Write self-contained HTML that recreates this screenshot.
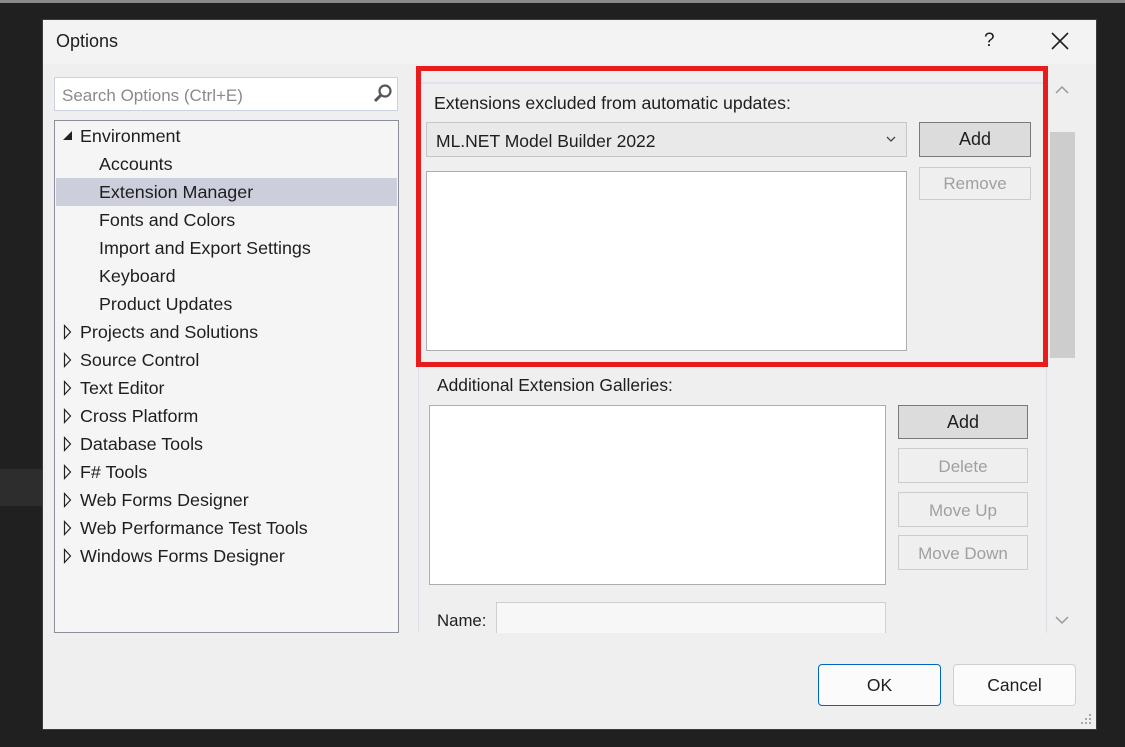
<!DOCTYPE html>
<html><head><meta charset="utf-8"><style>
*{margin:0;padding:0;box-sizing:border-box}
body{width:1125px;height:747px;background:#202020;position:relative;overflow:hidden;font-family:"Liberation Sans",sans-serif;color:#1e1e1e}
.a{position:absolute}
.t{font-size:17px;white-space:nowrap}
.tr{font-size:17.9px}
.btn{position:absolute;border:1px solid #cccccc;background:#efefef;color:#a0a0a0;font-size:17px;text-align:center}
</style></head><body>
<div class="a" style="left:0;top:0;width:1125px;height:3px;background:#8a8a8a"></div>
<div class="a" style="left:0;top:469px;width:43px;height:37px;background:#2d2d2d"></div>
<div class="a" style="left:42px;top:19px;width:1055px;height:711px;background:#3c3c3c"></div>
<div class="a" style="left:43px;top:20px;width:1053px;height:709px;background:#efefef"></div>
<div class="a" style="left:43px;top:20px;width:1053px;height:44px;background:#f3f3f3"></div>
<div class="a t" style="left:56px;top:31px;font-size:18px">Options</div>
<div class="a t" style="left:984px;top:30px;font-size:19px">?</div>
<svg class="a" style="left:1050px;top:31px" width="20" height="20"><path d="M2 2L18 18M18 2L2 18" stroke="#222" stroke-width="1.6"/></svg>

<div class="a" style="left:54px;top:77px;width:344px;height:34px;background:#fff;border:1px solid #ccd2e2"></div>
<div class="a t" style="left:62px;top:86px;color:#8a8a8a">Search Options (Ctrl+E)</div>
<svg class="a" style="left:372px;top:83px" width="22" height="22"><circle cx="13" cy="8" r="5.5" stroke="#555" stroke-width="2.2" fill="none"/><path d="M9 12L3 18" stroke="#555" stroke-width="3"/></svg>

<div class="a" style="left:54px;top:120px;width:345px;height:513px;background:#f5f5f5;border:1px solid #8a8f99"></div>
<div class="a" style="left:56px;top:178px;width:341px;height:28px;background:#cccedb"></div>
<svg class="a" style="left:62px;top:130px" width="12" height="12"><path d="M1 10H10V1Z" fill="#222"/></svg>
<div class="a t tr" style="left:80px;top:126px">Environment</div>
<div class="a t tr" style="left:99px;top:154px">Accounts</div>
<div class="a t tr" style="left:99px;top:182px">Extension Manager</div>
<div class="a t tr" style="left:99px;top:210px">Fonts and Colors</div>
<div class="a t tr" style="left:99px;top:238px">Import and Export Settings</div>
<div class="a t tr" style="left:99px;top:266px">Keyboard</div>
<div class="a t tr" style="left:99px;top:294px">Product Updates</div>
<svg class="a" style="left:63px;top:323px" width="10" height="260">
<g fill="none" stroke="#222" stroke-width="1.2">
<path d="M1.5 2.5L7.5 9L1.5 15.5Z"/>
<path transform="translate(0,28)" d="M1.5 2.5L7.5 9L1.5 15.5Z"/>
<path transform="translate(0,56)" d="M1.5 2.5L7.5 9L1.5 15.5Z"/>
<path transform="translate(0,84)" d="M1.5 2.5L7.5 9L1.5 15.5Z"/>
<path transform="translate(0,112)" d="M1.5 2.5L7.5 9L1.5 15.5Z"/>
<path transform="translate(0,140)" d="M1.5 2.5L7.5 9L1.5 15.5Z"/>
<path transform="translate(0,168)" d="M1.5 2.5L7.5 9L1.5 15.5Z"/>
<path transform="translate(0,196)" d="M1.5 2.5L7.5 9L1.5 15.5Z"/>
<path transform="translate(0,224)" d="M1.5 2.5L7.5 9L1.5 15.5Z"/>
</g></svg>
<div class="a t tr" style="left:80px;top:322px">Projects and Solutions</div>
<div class="a t tr" style="left:80px;top:350px">Source Control</div>
<div class="a t tr" style="left:80px;top:378px">Text Editor</div>
<div class="a t tr" style="left:80px;top:406px">Cross Platform</div>
<div class="a t tr" style="left:80px;top:434px">Database Tools</div>
<div class="a t tr" style="left:80px;top:462px">F# Tools</div>
<div class="a t tr" style="left:80px;top:490px">Web Forms Designer</div>
<div class="a t tr" style="left:80px;top:518px">Web Performance Test Tools</div>
<div class="a t tr" style="left:80px;top:546px">Windows Forms Designer</div>

<div class="a" style="left:418px;top:70px;width:629px;height:563px;border-left:1px solid #dde0e6;border-right:1px solid #dde0e6"></div>
<div class="a" style="left:420px;top:82px;width:625px;height:2px;background:#e0e4ea"></div>
<div class="a" style="left:1050px;top:132px;width:25px;height:226px;background:#cdcdcd"></div>
<svg class="a" style="left:1055px;top:85px" width="14" height="10"><path d="M1 8L7 2L13 8" stroke="#999" stroke-width="1.5" fill="none"/></svg>
<svg class="a" style="left:1055px;top:615px" width="14" height="10"><path d="M1 2L7 8L13 2" stroke="#999" stroke-width="1.5" fill="none"/></svg>

<div class="a t" style="left:434px;top:93px;font-size:17.7px">Extensions excluded from automatic updates:</div>
<div class="a" style="left:426px;top:122px;width:481px;height:35px;background:#e9e9e9;border:1px solid #c6c6c6"></div>
<div class="a t" style="left:436px;top:131px;font-size:17.5px">ML.NET Model Builder 2022</div>
<svg class="a" style="left:886px;top:135px" width="10" height="8"><path d="M1 2L5 6L9 2" stroke="#444" stroke-width="1.3" fill="none"/></svg>
<div class="btn" style="left:919px;top:122px;width:112px;height:35px;background:#dcdcdc;border-color:#7a7a7a;color:#1e1e1e;line-height:33px;font-size:18px">Add</div>
<div class="btn" style="left:919px;top:167px;width:112px;height:33px;line-height:31px">Remove</div>
<div class="a" style="left:426px;top:171px;width:481px;height:180px;background:#fff;border:1px solid #acacac"></div>

<div class="a t" style="left:437px;top:375px;font-size:17.4px">Additional Extension Galleries:</div>
<div class="a" style="left:429px;top:405px;width:457px;height:180px;background:#fff;border:1px solid #acacac"></div>
<div class="btn" style="left:898px;top:405px;width:130px;height:34px;background:#dcdcdc;border-color:#7a7a7a;color:#1e1e1e;line-height:32px;font-size:18px">Add</div>
<div class="btn" style="left:898px;top:448px;width:130px;height:35px;line-height:35px">Delete</div>
<div class="btn" style="left:898px;top:492px;width:130px;height:35px;line-height:35px">Move Up</div>
<div class="btn" style="left:898px;top:535px;width:130px;height:35px;line-height:35px">Move Down</div>
<div class="a t" style="left:437px;top:611px;font-size:16.8px">Name:</div>
<div class="a" style="left:496px;top:602px;width:390px;height:31px;background:#f7f7f7;border:1px solid #cfcfcf;border-bottom:none"></div>
<div class="a" style="left:418px;top:633px;width:640px;height:20px;background:#efefef"></div>

<div class="a" style="left:416px;top:66px;width:632px;height:301px;border:5px solid #e81c1c"></div>

<div class="a" style="left:818px;top:664px;width:123px;height:42px;background:#fbfbfb;border:1px solid #0067c0;border-radius:4px;font-size:17.5px;text-align:center;line-height:40px">OK</div>
<div class="a" style="left:953px;top:664px;width:123px;height:42px;background:#fbfbfb;border:1px solid #d0d0d0;border-radius:4px;font-size:17.5px;text-align:center;line-height:40px">Cancel</div>
<svg class="a" style="left:1081px;top:714px" width="12" height="12" fill="#aaa"><rect x="8" y="0" width="2" height="2"/><rect x="4" y="4" width="2" height="2"/><rect x="8" y="4" width="2" height="2"/><rect x="0" y="8" width="2" height="2"/><rect x="4" y="8" width="2" height="2"/><rect x="8" y="8" width="2" height="2"/></svg>
</body></html>
